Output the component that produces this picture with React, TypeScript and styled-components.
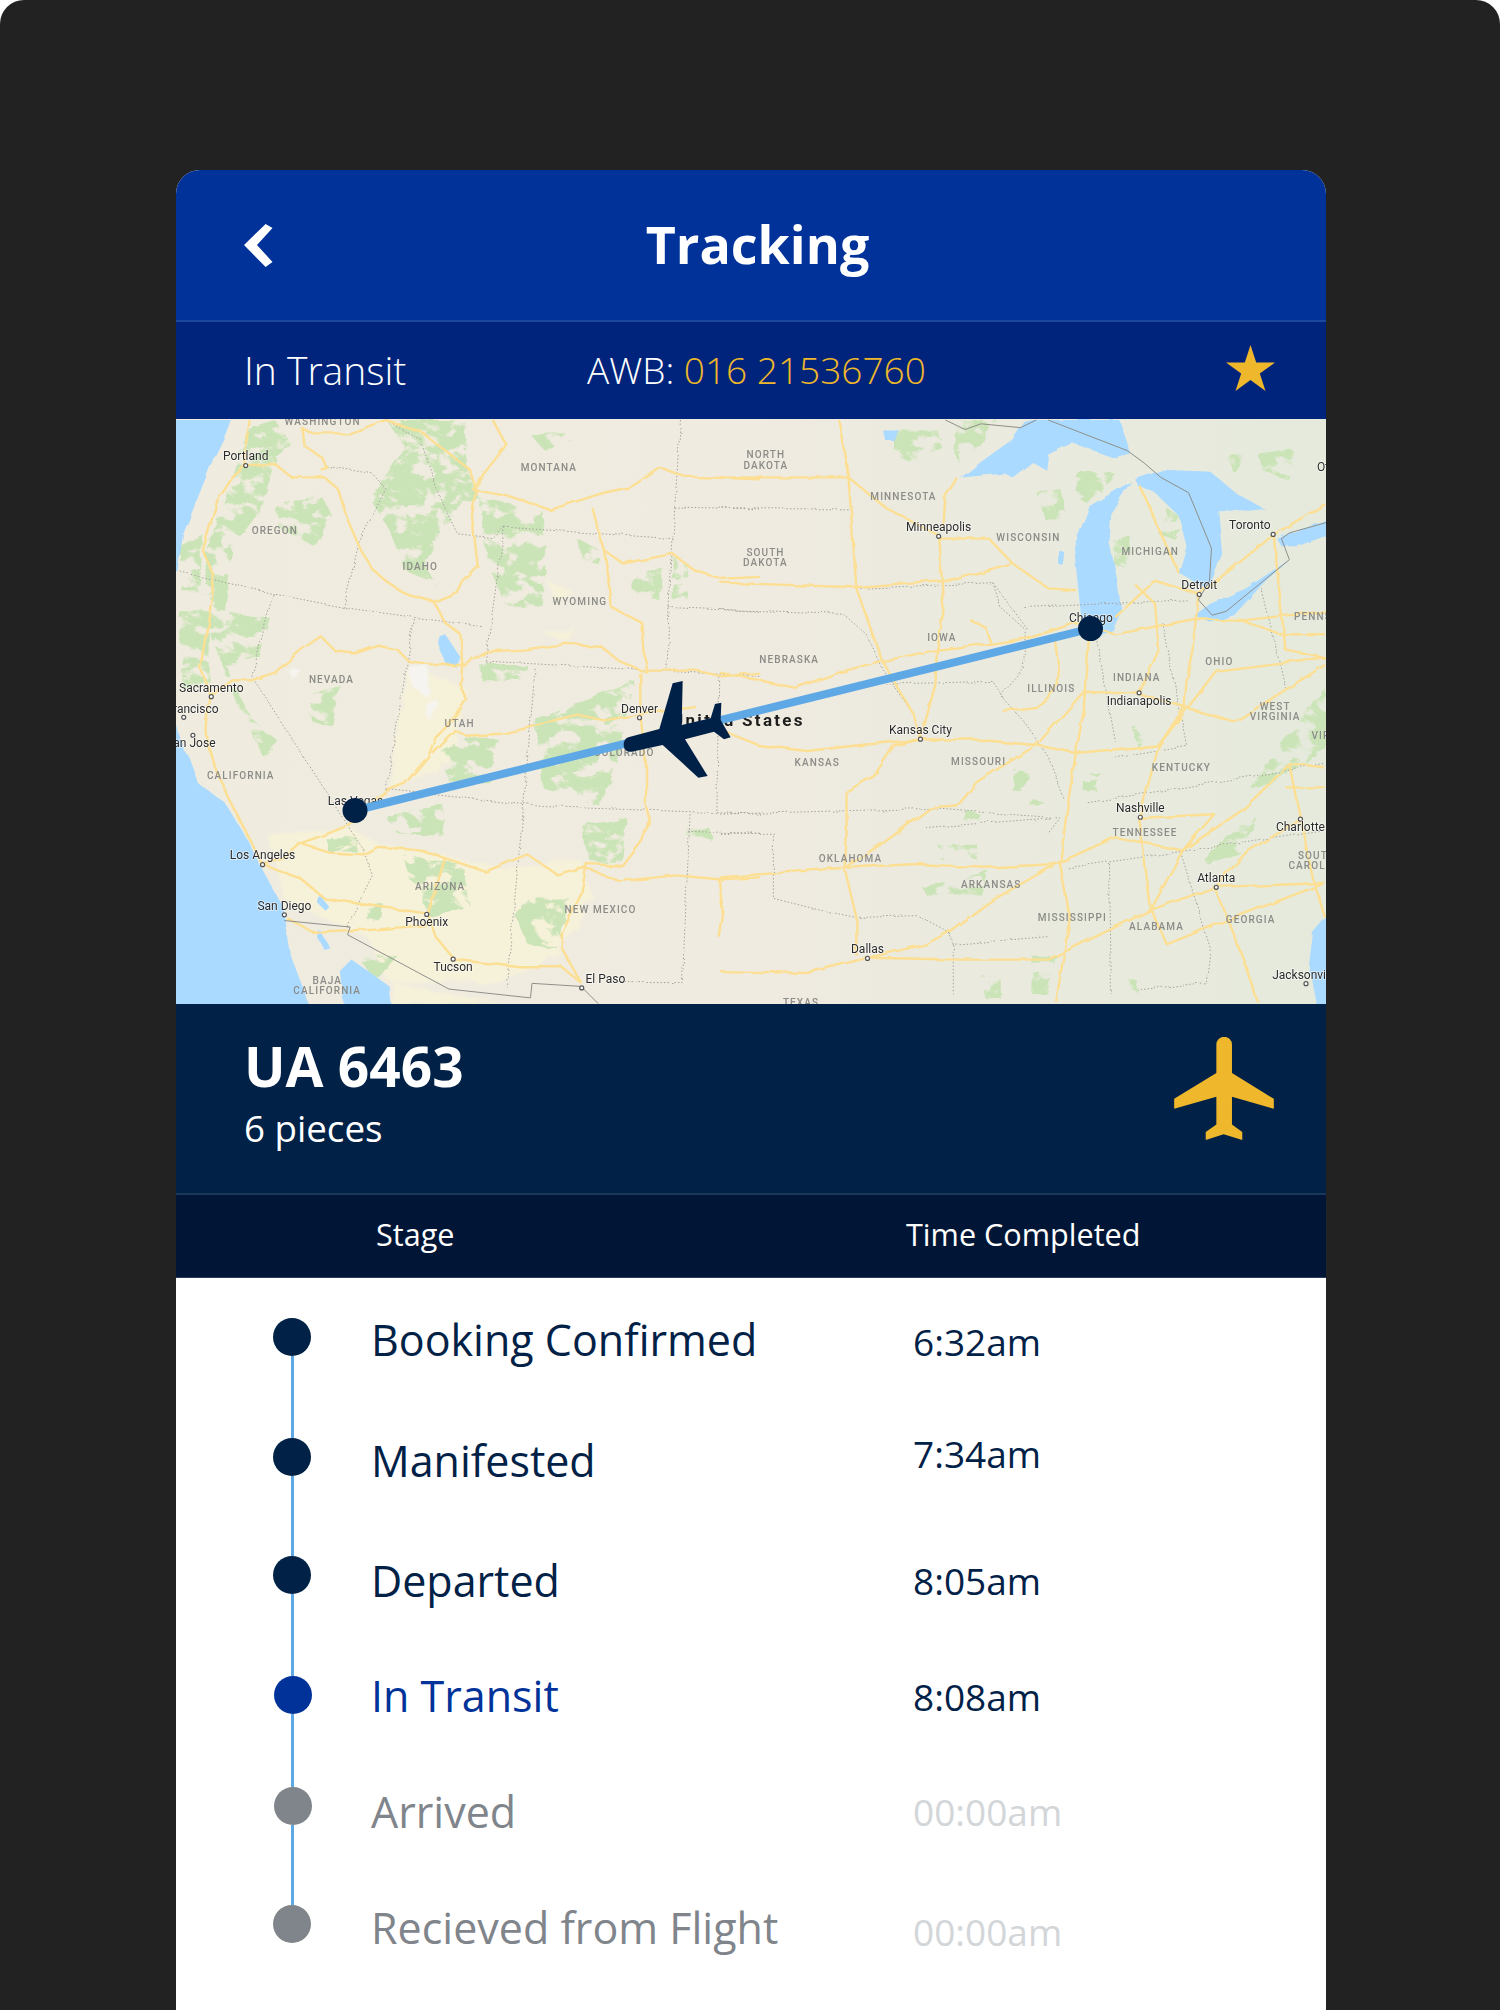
import styled, { createGlobalStyle } from "styled-components";

const GlobalStyle = createGlobalStyle`
  html, body {
    margin: 0;
    padding: 0;
    background: #fff;
  }
  body {
    font-family: "Open Sans", "Liberation Sans", sans-serif;
  }
`;

const Frame = styled.div`
  width: 1500px;
  height: 2010px;
  box-sizing: border-box;
  padding: 170px 174px 0 176px;
  background: #222222;
  border-radius: 24px 24px 0 0;
  overflow: hidden;
`;

const Card = styled.div`
  height: 1840px;
  display: flex;
  flex-direction: column;
  background: #fff;
  border-radius: 24px 24px 0 0;
  overflow: hidden;
`;

const Header = styled.header`
  height: 150px;
  flex: none;
  display: flex;
  align-items: center;
  padding-left: 68px;
  background: #003299;
  border-bottom: 2px solid #1c479f;
`;

const Title = styled.h1`
  flex: 1;
  margin: 0 0 4px;
  padding-right: 84px;
  text-align: center;
  color: #fff;
  font-size: 52px;
  font-weight: 700;
`;

const SubBar = styled.div`
  height: 97px;
  flex: none;
  box-sizing: border-box;
  display: flex;
  align-items: center;
  padding: 0 51px 2px 68px;
  background: #00247c;
  color: #fff;
  font-size: 37px;
  font-weight: 300;
`;

const Status = styled.div`
  width: 343px;
  font-size: 39px;
`;

const Awb = styled.div`
  flex: 1;
`;

const AwbNumber = styled.span`
  color: #efb72b;
`;

const StarIcon = styled.svg`
  width: 49px;
  height: 46px;
  margin-bottom: 4px;
  fill: #efb72b;
`;

const MapSvg = styled.svg`
  width: 1150px;
  height: 585px;
  flex: none;
  display: block;
`;

const Land = styled.rect`
  fill: url(#landFill);
`;

const Water = styled.polygon`
  fill: #aadaff;
`;

const Forest = styled.polygon`
  fill: #cbe4b7;
`;

const Desert = styled.polygon<{ $snow?: boolean }>`
  fill: ${(p) => (p.$snow ? "#f5f4f0" : "#f6f1d9")};
`;

const Road = styled.polyline`
  fill: none;
  stroke: #fcdf92;
  stroke-width: 2.4px;
  stroke-linejoin: round;
  vector-effect: non-scaling-stroke;
`;

const StateLine = styled.polyline`
  fill: none;
  stroke: #a3a39a;
  stroke-width: 1px;
  stroke-dasharray: 1.5 2;
  vector-effect: non-scaling-stroke;
`;

const CountryLine = styled.polyline`
  fill: none;
  stroke: #8f8f8a;
  stroke-width: 1px;
  vector-effect: non-scaling-stroke;
`;

const CityLabel = styled.text`
  font-family: Roboto, "Liberation Sans", sans-serif;
  font-size: 12px;
  fill: #2a2a2a;
  paint-order: stroke;
  stroke: rgba(255, 255, 255, 0.6);
  stroke-width: 1.5px;
`;

const StateLabel = styled.text`
  font-family: Roboto, "Liberation Sans", sans-serif;
  font-size: 10px;
  font-weight: 500;
  letter-spacing: 1.1px;
  fill: #8b8b88;
`;

const CountryLabel = styled.text`
  font-family: Roboto, "Liberation Sans", sans-serif;
  font-size: 17px;
  font-weight: 700;
  letter-spacing: 2.3px;
  fill: #1c1c1c;
`;

const CityDot = styled.circle`
  fill: #fff;
  stroke: #555;
  stroke-width: 1.2px;
`;

const RouteLine = styled.line`
  stroke: #5fa8e6;
  stroke-width: 8px;
`;

const RouteStop = styled.circle`
  fill: #002147;
`;

const RoutePlane = styled.path`
  fill: #002147;
`;

const FlightPanel = styled.div`
  height: 191px;
  flex: none;
  box-sizing: border-box;
  display: flex;
  justify-content: space-between;
  align-items: flex-start;
  padding: 32px 52px 0 68px;
  background: #012147;
  border-bottom: 2px solid #1a3759;
  color: #fff;
`;

const FlightNumber = styled.div`
  font-size: 55px;
  line-height: 60px;
  font-weight: 700;
`;

const Pieces = styled.div`
  margin-top: 10px;
  font-size: 36.7px;
  line-height: 44px;
`;

const PlaneIcon = styled.svg`
  width: 100px;
  height: 103px;
  margin-top: 1px;
  fill: #efb72b;
`;

const TableHead = styled.div`
  height: 83px;
  flex: none;
  box-sizing: border-box;
  display: flex;
  align-items: center;
  padding-bottom: 4px;
  background: #011636;
  border-bottom: 1px solid #2b3d5a;
  color: #fff;
  font-size: 30.6px;
`;

const StageHead = styled.div`
  width: 530px;
  margin-left: 200px;
`;

const StageList = styled.div`
  padding: 32px 0 0 97px;
`;

const StageRow = styled.div<{ $height: number }>`
  height: ${(p) => p.$height}px;
  display: grid;
  grid-template-columns: 38px 602px 1fr;
`;

const Track = styled.div<{ $shift: number }>`
  display: flex;
  flex-direction: column;
  align-items: center;
  padding-top: 8px;
  margin-left: ${(p) => p.$shift}px;
  margin-bottom: -8px;
`;

const Dot = styled.div<{ $state: Stage["state"] }>`
  width: 38px;
  height: 38px;
  flex: none;
  border-radius: 50%;
  background: ${(p) => (p.$state === "done" ? "#012147" : p.$state === "active" ? "#003299" : "#7f858b")};
`;

const Connector = styled.div`
  width: 3px;
  flex: 1;
  background: #5fa8e6;
`;

const StageName = styled.div<{ $state: Stage["state"]; $top: number }>`
  margin-top: ${(p) => p.$top}px;
  padding-left: 60px;
  font-size: 43px;
  line-height: 54px;
  color: ${(p) => (p.$state === "done" ? "#012147" : p.$state === "active" ? "#003299" : "#7f858b")};
`;

const StageTime = styled.div<{ $pending: boolean; $top: number }>`
  margin-top: ${(p) => p.$top}px;
  font-size: 37px;
  line-height: 46px;
  color: ${(p) => (p.$pending ? "#d3d6d9" : "#012147")};
`;

type Stage = {
  name: string;
  time: string;
  state: "done" | "active" | "pending";
  height: number;
  shift: number;
  nameTop: number;
  timeTop: number;
};

const stages: Stage[] = [
  { name: "Booking Confirmed", time: "6:32am", state: "done", height: 120, shift: 0, nameTop: 3, timeTop: 9 },
  { name: "Manifested", time: "7:34am", state: "done", height: 118, shift: 0, nameTop: 4, timeTop: 1 },
  { name: "Departed", time: "8:05am", state: "done", height: 120, shift: 0, nameTop: 6, timeTop: 10 },
  { name: "In Transit", time: "8:08am", state: "active", height: 111, shift: 1, nameTop: 1, timeTop: 6 },
  { name: "Arrived", time: "00:00am", state: "pending", height: 118, shift: 1, nameTop: 6, timeTop: 10 },
  { name: "Recieved from Flight", time: "00:00am", state: "pending", height: 100, shift: 0, nameTop: 4, timeTop: 12 },
];

// traced in zoom coordinates, each half of the map has its own scale
const WEST = "translate(-16 1) scale(0.3827)";
const EAST = "translate(544 1) scale(0.3954 0.3827)";
const west = (x: number, y: number) => ({ x: x * 0.3827 - 16, y: y * 0.3827 + 1 });
const east = (x: number, y: number) => ({ x: x * 0.3954 + 544, y: y * 0.3827 + 1 });

const westWater = [
  "0,0 185,0 170,40 140,100 100,200 60,300 45,400 0,420",
  "0,780 45,800 60,860 75,880 100,950 170,1000 230,1100 265,1170 320,1270 340,1400 390,1530 0,1530",
  "480,1530 470,1440 500,1410 600,1480 605,1530",
  "730,565 745,560 785,620 775,645 750,640 730,600",
  "415,1240 440,1270 430,1280 410,1260",
  "415,1330 445,1380 430,1385 410,1350",
];

const eastWater = [
  "610,150 660,110 740,50 770,5 790,0 1010,0 1040,90 1000,100 890,60 830,90 825,130 790,110 740,150 720,140",
  "895,330 935,225 1040,160 990,240 985,320 1005,420 1015,500 990,555 950,570 915,530 905,430",
  "1050,155 1120,130 1240,135 1310,195 1380,235 1340,240 1260,235 1270,350 1240,430 1230,440 1160,400 1180,330 1160,250 1100,190 1055,170",
  "1200,510 1240,480 1330,440 1440,365 1380,420 1300,510 1240,530",
  "1410,310 1440,295 1540,262 1540,300 1460,330 1420,330",
  "1540,1290 1500,1340 1490,1420 1510,1530 1540,1530",
  "855,340 870,345 868,380 855,375",
  "415,30 455,30 440,55 420,55",
];

const westDesert = [
  "650,640 800,700 760,900 600,960 620,800",
  "280,1080 500,1070 560,1100 900,1170 1100,1150 1130,1250 1040,1400 900,1470 600,1470 540,1350 330,1260",
  "610,1470 900,1525 600,1530",
  "1010,420 1080,450 1040,480",
  "1000,560 1080,540 1060,580",
];

const westSnow = ["650,640 700,640 700,720 660,700", "330,650 365,650 345,675", "700,740 730,735 700,790"];

const westForest = [
  "230,20 300,0 340,60 290,130 260,240 190,330 170,500 290,520 260,620 170,640 240,780 310,840 270,880 200,740 140,580 110,500 120,340 190,150",
  "590,0 800,0 800,120 830,200 780,230 730,300 690,380 730,440 640,390 600,290 550,210 580,150 640,70",
  "830,200 1000,240 1010,400 990,500 900,480 860,380",
  "980,780 1240,680 1200,880 1150,1010 1000,960",
  "800,830 880,830 860,950 760,950 720,870",
  "970,40 1060,30 1080,60 1000,75",
  "640,1140 790,1160 810,1270 700,1300 680,1220 650,1200",
  "970,1250 1070,1250 1040,1380 960,1370 930,1300",
  "1100,1060 1220,1040 1210,1160 1120,1150",
  "50,330 110,300 100,450 60,450",
  "1230,420 1310,385 1310,470 1230,470",
  "430,1090 510,1090 520,1130 440,1130",
  "540,1270 580,1260 575,1310 540,1310",
  "305,225 420,190 450,250 400,330 310,280",
  "390,720 470,690 450,800 400,790",
  "840,640 960,640 950,680 840,680",
  "590,1040 740,1000 745,1090 620,1080",
  "1090,310 1150,340 1150,380 1100,360",
  "1380,1070 1440,1070 1440,1100 1380,1090",
  "520,1400 620,1400 560,1470",
  "1340,360 1380,360 1380,470 1340,470",
  "50,500 130,500 130,700 60,700",
];

const eastForest = [
  "440,30 560,30 560,70 480,110 440,90",
  "600,0 700,0 610,120 590,80",
  "1360,90 1450,80 1440,160 1370,130",
  "1000,320 1040,300 1030,390 990,380",
  "1220,1140 1360,1030 1320,1130 1230,1160",
  "1340,960 1530,700 1530,860 1400,950",
  "510,1220 680,1180 660,1240 520,1240",
  "740,910 790,930 770,970 740,970",
  "620,1020 660,1030 650,1050 620,1050",
  "790,990 820,1000 810,1020 785,1015",
  "920,930 960,920 950,970 920,970",
  "800,190 860,180 880,260 820,260",
  "900,130 1000,140 930,220 900,200",
  "1040,800 1090,800 1060,860",
  "790,1400 850,1400 830,1500 790,1500",
  "660,1450 710,1460 710,1510 670,1510",
  "1130,230 1170,260 1150,310 1110,300",
  "550,1110 650,1110 650,1150 560,1150",
  "1280,90 1330,100 1300,140",
  "1030,1460 1060,1470 1050,1510",
];

const westRoads = [
  "235,0 228,40 222,90 224,118 190,150 150,210 112,340 135,400 138,450 120,560 105,650 133,720 120,790 125,850 165,960 215,1060 268,1160",
  "224,118 300,115 345,150 430,150 465,180 490,260 525,340 555,390 590,420 625,445 660,460 715,475 775,450 790,420 830,380 815,250 825,185 810,130 745,80 680,30 590,0",
  "370,20 375,65 425,100 435,125 420,130",
  "370,20 400,35 495,35 550,15 590,0",
  "815,180 905,65 880,20 870,0",
  "815,180 900,195 1020,235 1080,215 1160,190 1230,175 1310,125 1370,148 1568,155",
  "790,640 850,605 950,600 1060,585 1150,590 1200,630 1260,655 1400,655 1470,670 1568,660",
  "715,475 745,530 785,560 790,640 785,700 800,730 770,780 720,830 700,880 640,950 590,970 540,1010 490,1060 440,1080 370,1105 330,1140 268,1160",
  "133,720 190,680 240,680 300,660 370,600 420,565 460,605 510,610 570,590 620,600 650,630 720,640 790,640",
  "710,870 770,810 800,825 890,820 960,805 1030,785 1090,770 1160,785 1250,770 1400,750",
  "1255,660 1255,770 1270,900 1270,1000 1280,1040 1260,1100 1210,1165 1115,1160 1100,1240 1050,1340 1050,1380 1100,1470",
  "360,1105 440,1130 530,1135 570,1115 680,1125 745,1145 850,1180 960,1135 1040,1190 1110,1170 1200,1205 1350,1190 1460,1200 1568,1195",
  "268,1160 370,1200 430,1250 560,1270 700,1290 720,1350 770,1410 860,1420 940,1430 1050,1430 1100,1470",
  "330,1300 400,1340 520,1335 700,1320",
  "1130,230 1160,340 1175,430 1180,490 1260,530 1270,660",
  "1160,340 1210,375 1340,350 1400,395 1470,415 1568,410",
  "1460,1200 1470,1280 1460,1350",
  "700,1290 745,1145",
];

const eastRoads = [
  "300,0 325,150 345,440 410,630 490,770 507,835",
  "0,150 325,150 420,230 550,300 555,310 680,310 740,375 830,440 900,445",
  "555,310 565,500 548,610 545,690 507,835",
  "0,425 340,437 600,415 700,385 735,375",
  "410,630 550,600 680,585 780,570 900,530 1000,560 1200,520 1310,525 1530,500",
  "0,660 100,680 190,700 300,660 405,630",
  "0,810 100,850 220,865 350,850 507,835 650,835 800,850 900,870 1110,850 1255,655 1530,620",
  "507,835 440,850 390,930 320,970 320,1100 315,1170 345,1300 345,1400",
  "800,850 650,945 600,1010 530,1015 420,1100 315,1170 0,1195",
  "315,1170 500,1160 670,1170 850,1160 1000,1090 1170,1125 1320,1020 1440,900 1530,910",
  "850,1160 680,1260 575,1340 520,1370 375,1405 220,1445 0,1440",
  "375,1405 600,1410 830,1410 1090,1280 1255,1220 1400,1215 1530,1210",
  "800,850 920,710 1060,715 1175,750 1300,790 1530,640",
  "1175,750 1110,850 1060,1040 1090,1280",
  "1060,1040 1250,1030 1170,1125 1090,1280",
  "1255,1220 1330,1130 1468,1045 1440,900",
  "1468,1045 1500,1200 1530,1300",
  "930,570 920,760 900,870 880,1000 860,1160 885,1300 850,1520",
  "1210,455 1195,600 1180,680 1175,750",
  "1210,455 1100,420 1000,515",
  "1210,455 1280,400 1400,300 1530,220",
  "1160,400 1060,170",
  "1050,430 1100,480 1110,600 1060,715",
  "715,760 800,750 835,720 860,660 850,580",
  "635,525 670,540 685,585",
  "1400,300 1430,600 1530,620",
  "600,150 570,200 565,280",
  "1310,520 1415,560 1530,560",
  "1430,960 1530,960",
  "1090,1280 1130,1370 1250,1320 1530,1210",
  "1250,1220 1320,1400 1360,1520",
];

const westStates = [
  "45,395 300,455 480,490 840,540",
  "480,490 520,320 590,180 555,140 430,120",
  "295,455 240,670 530,1120 555,1190 500,1300 490,1330",
  "665,520 590,970",
  "590,965 1000,1010 1568,1030",
  "900,280 1340,310",
  "1360,0 1345,230 1330,490 1325,650",
  "900,280 850,630",
  "980,650 950,1010 905,1480",
  "850,630 1568,670",
  "1345,230 1568,235",
  "1330,490 1568,500",
  "1385,1030 1365,1470 1200,1470",
  "1380,1075 1568,1080",
  "1460,670 1455,1030",
  "590,0 680,50 730,200 780,300 870,310 900,280",
];

const eastStates = [
  "0,232 325,232",
  "0,495 310,505 370,560 410,650 490,770",
  "355,440 690,425 780,550",
  "690,425 710,490 775,550 770,650 710,720 770,790 830,880 870,990",
  "420,690 690,683 720,730",
  "0,1030 530,1015 860,1040 830,1080",
  "0,1080 135,1080 135,1250 250,1280 345,1300 500,1295 580,1340 590,1370 830,1350",
  "520,1065 835,1040",
  "880,1170 1150,1130 1530,1070",
  "930,1000 1530,900",
  "950,560 1000,840",
  "1120,530 1180,850 1000,880",
  "985,1160 990,1500",
  "1165,1130 1240,1380 1230,1470 1050,1490",
  "770,490 1180,470",
  "590,1370 590,1500",
  "1370,440 1430,700",
];

const westBorder = ["325,1308 497,1325 490,1345 755,1487 968,1510 972,1472 1100,1480 1145,1525"];
const eastBorder = [
  "570,0 620,25 660,10 760,20 800,0",
  "830,0 1030,80 1070,110 1115,150 1185,190 1243,335 1238,420 1210,470 1245,510 1280,500 1440,365 1420,310 1440,295 1533,268",
];

type Label = [string, number, number];

const westCities: Label[] = [
  ["Portland", 224, 105],
  ["Sacramento", 134, 710],
  ["Denver", 1253, 765],
  ["Las Vegas", 511, 1005],
  ["Los Angeles", 268, 1148],
  ["San Diego", 325, 1280],
  ["Phoenix", 697, 1322],
  ["Tucson", 766, 1440],
];
const westClipped: Label[] = [
  ["San Francisco", 153, 765],
  ["San Jose", 145, 855],
];
const westTowns = [
  [224, 119],
  [134, 723],
  [62, 777],
  [86, 824],
  [1253, 778],
  [268, 1162],
  [325, 1293],
  [697, 1292],
  [766, 1409],
  [1102, 1484],
];

const westStatesText: Label[] = [
  ["WASHINGTON", 425, 12],
  ["MONTANA", 1016, 132],
  ["OREGON", 300, 298],
  ["IDAHO", 680, 393],
  ["WYOMING", 1097, 484],
  ["NEVADA", 448, 688],
  ["UTAH", 783, 803],
  ["COLORADO", 1213, 877],
  ["CALIFORNIA", 211, 937],
  ["ARIZONA", 732, 1228],
  ["NEW MEXICO", 1151, 1287],
  ["BAJA", 437, 1474],
  ["CALIFORNIA", 437, 1501],
];

const eastCities: Label[] = [
  ["Minneapolis", 553, 290],
  ["Toronto", 1340, 286],
  ["Detroit", 1212, 442],
  ["Chicago", 938, 528],
  ["Indianapolis", 1060, 745],
  ["Kansas City", 507, 820],
  ["Nashville", 1063, 1025],
  ["Charlotte", 1468, 1075],
  ["Atlanta", 1255, 1208],
  ["Dallas", 373, 1394],
  ["Jacksonville", 1480, 1460],
];
const eastTowns = [
  [553, 304],
  [1399, 299],
  [1212, 456],
  [1060, 713],
  [507, 834],
  [1063, 1038],
  [1468, 1043],
  [1255, 1221],
  [373, 1407],
  [1482, 1473],
];

const eastStatesText: Label[] = [
  ["NORTH", 116, 100],
  ["DAKOTA", 116, 127],
  ["SOUTH", 115, 355],
  ["DAKOTA", 115, 382],
  ["MINNESOTA", 464, 209],
  ["WISCONSIN", 780, 315],
  ["MICHIGAN", 1088, 353],
  ["PENNSYLVANIA", 1560, 522],
  ["IOWA", 561, 577],
  ["NEBRASKA", 175, 636],
  ["OHIO", 1263, 639],
  ["INDIANA", 1054, 683],
  ["ILLINOIS", 838, 712],
  ["WEST", 1404, 758],
  ["VIRGINIA", 1404, 785],
  ["VIRGINIA", 1560, 833],
  ["KANSAS", 246, 905],
  ["MISSOURI", 654, 902],
  ["KENTUCKY", 1167, 917],
  ["TENNESSEE", 1075, 1086],
  ["OKLAHOMA", 330, 1155],
  ["ARKANSAS", 686, 1224],
  ["MISSISSIPPI", 891, 1310],
  ["ALABAMA", 1104, 1332],
  ["GEORGIA", 1342, 1314],
  ["SOUTH", 1510, 1146],
  ["CAROLINA", 1510, 1174],
  ["TEXAS", 205, 1530],
];

const TrackingMap = () => (
  <MapSvg viewBox="0 0 1150 585" aria-label="Route map">
    <defs>
      <linearGradient id="landFill" x1="0" x2="1" y1="0" y2="0">
        <stop offset="0" stopColor="#efecdf" />
        <stop offset="0.5" stopColor="#f0ebe0" />
        <stop offset="0.62" stopColor="#eceadf" />
        <stop offset="1" stopColor="#e5eadc" />
      </linearGradient>
      {/* breaks the forest shapes up into small patches */}
      <filter id="rough" x="-5%" y="-5%" width="110%" height="110%">
        <feTurbulence type="fractalNoise" baseFrequency="0.05 0.07" numOctaves="4" seed="11" result="noise" />
        <feColorMatrix in="noise" type="matrix" values="0 0 0 0 0  0 0 0 0 0  0 0 0 0 0  9 0 0 0 -3.5" result="mask" />
        <feComposite in="SourceGraphic" in2="mask" operator="in" result="patchy" />
        <feDisplacementMap in="patchy" in2="noise" scale="8" />
        <feGaussianBlur stdDeviation="0.5" />
      </filter>
      <filter id="soft" x="-5%" y="-5%" width="110%" height="110%">
        <feTurbulence type="fractalNoise" baseFrequency="0.06" numOctaves="3" seed="3" />
        <feDisplacementMap in="SourceGraphic" scale="10" />
        <feGaussianBlur stdDeviation="1" />
      </filter>
      <filter id="wiggle" x="-5%" y="-5%" width="110%" height="110%">
        <feTurbulence type="fractalNoise" baseFrequency="0.05" numOctaves="2" seed="8" />
        <feDisplacementMap in="SourceGraphic" scale="5" />
        <feGaussianBlur stdDeviation="0.25" />
      </filter>
    </defs>

    <Land width="1150" height="585" />

    <g filter="url(#soft)">
      <g transform={WEST}>
        {westDesert.map((p) => (
          <Desert key={p} points={p} />
        ))}
        {westSnow.map((p) => (
          <Desert key={p} points={p} $snow />
        ))}
      </g>
    </g>
    <g filter="url(#rough)">
      <g transform={WEST}>
        {westForest.map((p) => (
          <Forest key={p} points={p} />
        ))}
      </g>
      <g transform={EAST}>
        {eastForest.map((p) => (
          <Forest key={p} points={p} />
        ))}
      </g>
    </g>

    <g filter="url(#wiggle)">
      <g transform={WEST}>
        {westWater.map((p) => (
          <Water key={p} points={p} />
        ))}
        {westStates.map((p) => (
          <StateLine key={p} points={p} />
        ))}
        {westRoads.map((p) => (
          <Road key={p} points={p} />
        ))}
      </g>
      <g transform={EAST}>
        {eastWater.map((p) => (
          <Water key={p} points={p} />
        ))}
        {eastStates.map((p) => (
          <StateLine key={p} points={p} />
        ))}
        {eastRoads.map((p) => (
          <Road key={p} points={p} />
        ))}
      </g>
    </g>

    <g transform={WEST}>
      {westBorder.map((p) => (
        <CountryLine key={p} points={p} />
      ))}
    </g>
    <g transform={EAST}>
      {eastBorder.map((p) => (
        <CountryLine key={p} points={p} />
      ))}
    </g>

    {westTowns.map(([x, y]) => (
      <CityDot key={`${x}-${y}`} cx={west(x, y).x} cy={west(x, y).y} r="2" />
    ))}
    {eastTowns.map(([x, y]) => (
      <CityDot key={`${x}-${y}`} cx={east(x, y).x} cy={east(x, y).y} r="2" />
    ))}
    {westStatesText.map(([t, x, y]) => (
      <StateLabel key={t + y} x={west(x, y).x} y={west(x, y).y} textAnchor="middle">
        {t}
      </StateLabel>
    ))}
    {eastStatesText.map(([t, x, y]) => (
      <StateLabel key={t + y} x={east(x, y).x} y={east(x, y).y} textAnchor="middle">
        {t}
      </StateLabel>
    ))}
    {westCities.map(([t, x, y]) => (
      <CityLabel key={t} x={west(x, y).x} y={west(x, y).y} textAnchor="middle">
        {t}
      </CityLabel>
    ))}
    {westClipped.map(([t, x, y]) => (
      <CityLabel key={t} x={west(x, y).x} y={west(x, y).y} textAnchor="end">
        {t}
      </CityLabel>
    ))}
    <CityLabel x={west(1112, 1470).x} y={west(1112, 1470).y}>
      El Paso
    </CityLabel>
    {eastCities.map(([t, x, y]) => (
      <CityLabel key={t} x={east(x, y).x} y={east(x, y).y} textAnchor="middle">
        {t}
      </CityLabel>
    ))}
    <CityLabel x={east(1510, 132).x} y={east(1510, 132).y}>
      Ottawa
    </CityLabel>
    <CountryLabel x="496" y="307">
      United States
    </CountryLabel>

    <RouteLine x1="179" y1="391.5" x2="914.5" y2="209.6" />
    <RouteStop cx="179" cy="391.5" r="12.5" />
    <RouteStop cx="914.5" cy="209.6" r="12.5" />
    <g transform="translate(424 241) scale(0.3333)">
      <RoutePlane d="M85,232 L178,207 L218,70 L248,63 L245,195 L332,175 L345,132 L364,128 L362,180 L392,232 L372,238 L342,215 L255,238 L323,348 L295,353 L188,255 L95,275 C65,280 65,238 85,232 Z" />
    </g>
  </MapSvg>
);

export default function App() {
  return (
    <>
      <GlobalStyle />
      <Frame>
        <Card>
          <Header>
            <svg width="29" height="43" viewBox="0 0 29 43" fill="#fff">
              <polygon points="21.6,0 28.5,4 13,21 28.5,38 21.6,43 0,21" />
            </svg>
            <Title>Tracking</Title>
          </Header>
          <SubBar>
            <Status>In Transit</Status>
            <Awb>
              AWB: <AwbNumber>016 21536760</AwbNumber>
            </Awb>
            <StarIcon viewBox="0 0 49 46">
              <polygon points="24.5,0 30.2,17.6 49,17.6 33.8,28.4 39.5,46 24.5,35 9.5,46 15.2,28.4 0,17.6 18.8,17.6" />
            </StarIcon>
          </SubBar>
          <TrackingMap />
          <FlightPanel>
            <div>
              <FlightNumber>UA 6463</FlightNumber>
              <Pieces>6 pieces</Pieces>
            </div>
            <PlaneIcon viewBox="0 0 300 310">
              <path d="M127,23 A23.5,23.5 0 0 1 174,23 L174,108 L300,186 L300,216 L174,180 L174,263 L205,286 L205,310 L149,293 L95,310 L95,286 L127,263 L127,180 L0,216 L0,186 L127,108 Z" />
            </PlaneIcon>
          </FlightPanel>
          <TableHead>
            <StageHead>Stage</StageHead>
            <div>Time Completed</div>
          </TableHead>
          <StageList>
            {stages.map((stage, index) => (
              <StageRow key={stage.name} $height={stage.height}>
                <Track $shift={stage.shift}>
                  <Dot $state={stage.state} />
                  {index < stages.length - 1 && <Connector />}
                </Track>
                <StageName $state={stage.state} $top={stage.nameTop}>
                  {stage.name}
                </StageName>
                <StageTime $pending={stage.state === "pending"} $top={stage.timeTop}>
                  {stage.time}
                </StageTime>
              </StageRow>
            ))}
          </StageList>
        </Card>
      </Frame>
    </>
  );
}
